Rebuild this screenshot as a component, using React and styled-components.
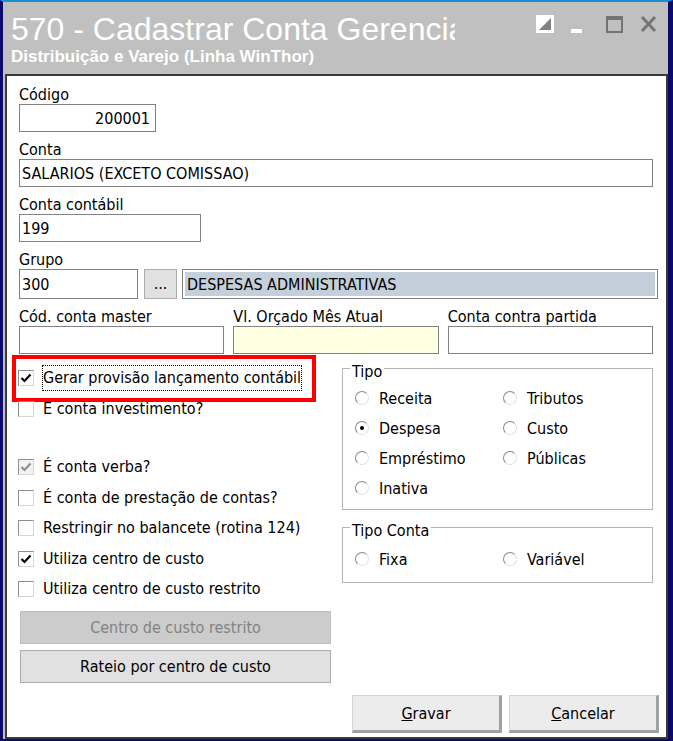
import React from "react";
import styled, { createGlobalStyle } from "styled-components";

const GlobalStyle = createGlobalStyle`
  html, body {
    margin: 0;
    padding: 0;
    background: #0b0b6b;
  }
  body {
    overflow: hidden;
  }
  * {
    box-sizing: border-box;
  }
`;

const uiFont = `"DejaVu Sans Condensed", "DejaVu Sans", sans-serif`;

const Window = styled.div`
  width: 673px;
  height: 741px;
  display: flex;
  flex-direction: column;
  background: #c0c0c0;
  border-style: solid;
  border-color: #1d8fcf #0b0b6b #0b0b6b #0b0b6b;
  border-width: 2px 5px 2px 3px;
`;

const TitleBar = styled.div`
  height: 72px;
  flex-shrink: 0;
  display: flex;
  justify-content: space-between;
  padding: 9px 11px 0 8px;
  color: #fff;
  font-family: "Liberation Sans", Arial, sans-serif;
`;

const TitleText = styled.div`
  display: flex;
  flex-direction: column;
`;

/* caption is cut by the window controls area, as in the app */
const Caption = styled.div`
  width: 444px;
  overflow: hidden;
  white-space: nowrap;
  font-size: 32px;
  line-height: 36px;
`;

const Subtitle = styled.div`
  font-size: 17px;
  font-weight: bold;
  line-height: 20px;
  white-space: nowrap;
`;

const Controls = styled.div`
  display: flex;
  align-items: flex-start;
  padding-top: 4px;
`;

const Ctrl = styled.span`
  display: block;
  margin-left: ${(p) => p.$ml || 0}px;
  line-height: 0;
`;

const Panel = styled.div`
  flex: 1;
  margin-left: 2px;
  display: flex;
  flex-direction: column;
  background: #fff;
  border: 2px solid #3a3a3a;
  padding: 10px 13px 4px 12px;
  font-family: ${uiFont};
  font-size: 16px;
  color: #000;
`;

const Fields = styled.div`
  display: flex;
  flex-direction: column;
  gap: 9px;
`;

const Field = styled.div`
  display: flex;
  flex-direction: column;
  width: ${(p) => (p.$w ? `${p.$w}px` : "auto")};
  min-width: 0;
`;

const Label = styled.div`
  height: 18px;
  line-height: 18px;
  white-space: nowrap;
`;

const TextBox = styled.div`
  height: ${(p) => p.$h || 28}px;
  width: ${(p) => (p.$w ? `${p.$w}px` : "auto")};
  flex-shrink: 0;
  display: flex;
  align-items: center;
  justify-content: ${(p) => (p.$right ? "flex-end" : "flex-start")};
  padding: 0 ${(p) => (p.$right ? 5 : 1)}px 0 2px;
  border: 1px solid #828282;
  background: ${(p) => p.$bg || "#fff"};
  white-space: nowrap;
`;

const InlineRow = styled.div`
  display: flex;
  align-items: stretch;
`;

const DotsButton = styled.div`
  width: 33px;
  height: 30px;
  margin-left: 6px;
  display: flex;
  align-items: flex-end;
  justify-content: center;
  padding-bottom: 6px;
  background: #e1e1e1;
  border: 1px solid #adadad;
  line-height: 16px;
`;

const DescBox = styled.div`
  flex: 1;
  height: 30px;
  margin: 0 -5px 0 5px;
  padding: 2px;
  border: 1px solid #828282;
  background: #fff;
`;

const DescFill = styled.div`
  height: 100%;
  display: flex;
  align-items: center;
  padding-left: 2px;
  background: #c3d0dc;
  white-space: nowrap;
`;

const ThreeCols = styled.div`
  display: grid;
  grid-template-columns: repeat(3, 1fr);
  gap: 9px;
`;

const Lower = styled.div`
  display: flex;
  margin-top: 2px;
`;

const LeftCol = styled.div`
  width: 323px;
  flex-shrink: 0;
  padding-top: 7px;
  display: flex;
  flex-direction: column;
`;

const RightCol = styled.div`
  width: 311px;
  display: flex;
  flex-direction: column;
`;

const CheckRow = styled.div`
  position: relative;
  height: 30.5px;
  margin-left: -1px;
  display: flex;
  align-items: center;
  gap: 8px;
`;

const Box = styled.span`
  width: 16px;
  height: 16px;
  flex-shrink: 0;
  display: flex;
  align-items: center;
  justify-content: center;
  border: 1px solid;
  border-color: #8e8e8e #d6d6d6 #d6d6d6 #8e8e8e;
  background: ${(p) => (p.$disabled ? "#f2f2f2" : "#fff")};
`;

const CheckText = styled.span`
  padding: 3px 0 3px 0;
  line-height: 18px;
  border: 1px ${(p) => (p.$focus ? "dotted #000" : "solid transparent")};
  white-space: nowrap;
`;

const Highlight = styled.span`
  position: absolute;
  left: -6px;
  top: -8px;
  width: 304px;
  height: 47px;
  border: 4px solid #ff0000;
  pointer-events: none;
`;

const Spacer = styled.div`
  height: ${(p) => p.$h}px;
  flex-shrink: 0;
`;

const WideButton = styled.div`
  width: 311px;
  height: 33px;
  margin: 6px 0 0 1px;
  display: flex;
  align-items: center;
  justify-content: center;
  background: ${(p) => (p.$disabled ? "#cccccc" : "#e1e1e1")};
  border: 1px solid ${(p) => (p.$disabled ? "#bfbfbf" : "#adadad")};
  color: ${(p) => (p.$disabled ? "#838383" : "#000")};
`;

const GroupBox = styled.fieldset`
  margin: ${(p) => p.$mt || 0}px 0 0 0;
  padding: ${(p) => p.$pt}px 12px ${(p) => p.$pb}px 12px;
  min-width: 0;
  border: 1px solid #b4b4b4;
`;

const Legend = styled.legend`
  margin-left: -5px;
  padding: 7px 2px 0 2px;
  line-height: 18px;
`;

const RadioGrid = styled.div`
  display: grid;
  grid-template-columns: 148px 1fr;
  grid-auto-rows: 30px;
`;

const RadioItem = styled.div`
  display: flex;
  align-items: center;
  gap: 10px;
  white-space: nowrap;
`;

const Circle = styled.span`
  width: 14px;
  height: 14px;
  flex-shrink: 0;
  border-radius: 50%;
  border: 1px solid;
  border-color: #8a8a8a #e2e2e2 #e2e2e2 #8a8a8a;
  background: #fff;
  display: flex;
  align-items: center;
  justify-content: center;

  &::after {
    content: "";
    width: 4px;
    height: 4px;
    border-radius: 50%;
    background: #000;
    display: ${(p) => (p.$on ? "block" : "none")};
  }
`;

const Footer = styled.div`
  margin: auto -6px 0 0;
  display: flex;
  justify-content: flex-end;
  gap: 7px;
`;

const DialogButton = styled.div`
  width: 150px;
  height: 38px;
  display: flex;
  align-items: center;
  justify-content: center;
  background: #ececec;
  border-style: solid;
  border-width: 1px 3px 3px 1px;
  border-color: #d4d4d4 #a0a0a0 #a0a0a0 #d4d4d4;
`;

const Tick = ({ color = "#000" }) => (
  <svg width="12" height="12" viewBox="0 0 12 12">
    <path d="M1.5 6 L4.5 9 L10.5 2.5" fill="none" stroke={color} strokeWidth="2.2" />
  </svg>
);

const Check = ({ checked, disabled, focus, highlight, children }) => (
  <CheckRow>
    <Box $disabled={disabled}>{checked && <Tick color={disabled ? "#8d8d8d" : "#000"} />}</Box>
    <CheckText $focus={focus}>{children}</CheckText>
    {highlight && <Highlight />}
  </CheckRow>
);

const Radio = ({ on, children }) => (
  <RadioItem>
    <Circle $on={on} />
    {children}
  </RadioItem>
);

const WindowControls = () => (
  <Controls>
    <Ctrl>
      <svg width="18" height="18" viewBox="0 0 18 18">
        <rect x="1" y="1" width="16" height="16" fill="#fff" stroke="#fff" strokeWidth="2" />
        <polygon points="15,3 15,15 3,15" fill="#808080" />
      </svg>
    </Ctrl>
    <Ctrl $ml={17}>
      <svg width="11" height="18" viewBox="0 0 11 18">
        <rect x="0" y="14" width="11" height="4" fill="#fff" />
      </svg>
    </Ctrl>
    <Ctrl $ml={24}>
      <svg width="17" height="18" viewBox="0 0 17 18">
        <rect x="1" y="2" width="15" height="15" fill="none" stroke="#747474" strokeWidth="2" />
        <rect x="1" y="2" width="15" height="3" fill="#747474" />
      </svg>
    </Ctrl>
    <Ctrl $ml={17}>
      <svg width="17" height="18" viewBox="0 0 17 18">
        <path d="M2 2 L15 16 M15 2 L2 16" stroke="#747474" strokeWidth="3" />
      </svg>
    </Ctrl>
  </Controls>
);

export default function App() {
  return (
    <>
      <GlobalStyle />
      <Window>
        <TitleBar>
          <TitleText>
            <Caption>570 - Cadastrar Conta Gerencial</Caption>
            <Subtitle>Distribuição e Varejo (Linha WinThor)</Subtitle>
          </TitleText>
          <WindowControls />
        </TitleBar>

        <Panel>
          <Fields>
            <Field $w={137}>
              <Label>Código</Label>
              <TextBox $right>200001</TextBox>
            </Field>
            <Field>
              <Label>Conta</Label>
              <TextBox>SALARIOS (EXCETO COMISSAO)</TextBox>
            </Field>
            <Field $w={182}>
              <Label>Conta contábil</Label>
              <TextBox>199</TextBox>
            </Field>
            <Field>
              <Label>Grupo</Label>
              <InlineRow>
                <TextBox $w={119} $h={30}>300</TextBox>
                <DotsButton>...</DotsButton>
                <DescBox>
                  <DescFill>DESPESAS ADMINISTRATIVAS</DescFill>
                </DescBox>
              </InlineRow>
            </Field>
            <ThreeCols>
              <Field>
                <Label>Cód. conta master</Label>
                <TextBox />
              </Field>
              <Field>
                <Label>Vl. Orçado Mês Atual</Label>
                <TextBox $bg="#ffffe1" />
              </Field>
              <Field>
                <Label>Conta contra partida</Label>
                <TextBox />
              </Field>
            </ThreeCols>
          </Fields>

          <Lower>
            <LeftCol>
              <Check checked focus highlight>
                Gerar provisão lançamento contábil
              </Check>
              <Check>E conta investimento?</Check>
              <Spacer $h={28} />
              <Check checked disabled>
                É conta verba?
              </Check>
              <Check>É conta de prestação de contas?</Check>
              <Check>Restringir no balancete (rotina 124)</Check>
              <Check checked>Utiliza centro de custo</Check>
              <Check>Utiliza centro de custo restrito</Check>
              <WideButton $disabled>Centro de custo restrito</WideButton>
              <WideButton>Rateio por centro de custo</WideButton>
            </LeftCol>

            <RightCol>
              <GroupBox $pt={2} $pb={6}>
                <Legend>Tipo</Legend>
                <RadioGrid>
                  <Radio>Receita</Radio>
                  <Radio>Tributos</Radio>
                  <Radio on>Despesa</Radio>
                  <Radio>Custo</Radio>
                  <Radio>Empréstimo</Radio>
                  <Radio>Públicas</Radio>
                  <Radio>Inativa</Radio>
                </RadioGrid>
              </GroupBox>
              <GroupBox $mt={5} $pt={4} $pb={8}>
                <Legend>Tipo Conta</Legend>
                <RadioGrid>
                  <Radio>Fixa</Radio>
                  <Radio>Variável</Radio>
                </RadioGrid>
              </GroupBox>
            </RightCol>
          </Lower>

          <Footer>
            <DialogButton>
              <span>
                <u>G</u>ravar
              </span>
            </DialogButton>
            <DialogButton>
              <span>
                <u>C</u>ancelar
              </span>
            </DialogButton>
          </Footer>
        </Panel>
      </Window>
    </>
  );
}
